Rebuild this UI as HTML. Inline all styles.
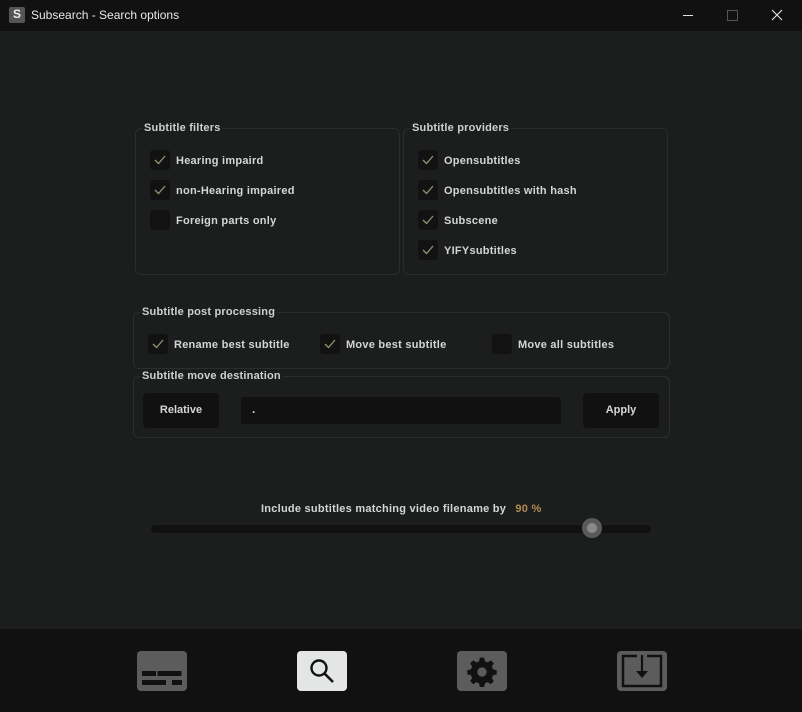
<!DOCTYPE html><html><head><style>
body{margin:0;width:802px;height:712px;background:#1c1e1d;font-family:"Liberation Sans",sans-serif;position:relative;overflow:hidden;color:#d4d6d6}
.a{position:absolute}
.tb{left:0;top:0;width:802px;height:31px;background:#111}
.grp{position:absolute;border:1px solid #2c2e2d;border-radius:6px}
.lg{position:absolute;font-size:11px;font-weight:bold;color:#cfd1d1;background:#1c1e1d;padding:0 2px;line-height:12px;letter-spacing:0.2px}
.cb{position:absolute;width:20px;height:20px;background:#121212;border-radius:3px}
.cb svg{position:absolute;left:4px;top:5px}
.lbl{position:absolute;font-size:11px;font-weight:bold;color:#d4d6d6;line-height:13px;letter-spacing:0.25px}
.btn{position:absolute;background:#111;border-radius:4px;font-size:11px;font-weight:bold;text-align:center;color:#d4d6d6}
.ic{position:absolute;top:651px;width:50px;height:40px;border-radius:4px;background:#5b5c5b}
</style></head><body>
<div class="a tb"></div>
<div class="a" style="left:9px;top:7px;width:16px;height:16px;background:#555;border-radius:2px;color:#eee;font-weight:bold;font-size:12px;text-align:center;line-height:14px">S</div>
<div class="a" style="left:31px;top:8px;font-size:12px;color:#e8e8e8">Subsearch - Search options</div>
<div class="a" style="left:683px;top:15px;width:10px;height:1px;background:#ddd"></div>
<div class="a" style="left:727px;top:10px;width:9px;height:9px;border:1px solid #555"></div>
<svg class="a" style="left:771px;top:9px" width="12" height="12"><path d="M1 1L11 11M11 1L1 11" stroke="#ddd" stroke-width="1.2"/></svg>

<div class="grp" style="left:135px;top:128px;width:263px;height:145px"></div>
<div class="lg" style="left:142px;top:122px">Subtitle filters</div>
<div class="grp" style="left:403px;top:128px;width:263px;height:145px"></div>
<div class="lg" style="left:410px;top:122px">Subtitle providers</div>

<div class="cb" style="left:150px;top:150px"><svg width="12" height="10"><path d="M1 5L4.5 8.5L11 1" stroke="#8b9670" stroke-width="1.3" fill="none"/></svg></div><div class="lbl" style="left:176px;top:155px">Hearing impaird</div>
<div class="cb" style="left:150px;top:180px"><svg width="12" height="10"><path d="M1 5L4.5 8.5L11 1" stroke="#8b9670" stroke-width="1.3" fill="none"/></svg></div><div class="lbl" style="left:176px;top:185px">non-Hearing impaired</div>
<div class="cb" style="left:150px;top:210px"></div><div class="lbl" style="left:176px;top:215px">Foreign parts only</div>

<div class="cb" style="left:418px;top:150px"><svg width="12" height="10"><path d="M1 5L4.5 8.5L11 1" stroke="#8b9670" stroke-width="1.3" fill="none"/></svg></div><div class="lbl" style="left:444px;top:155px">Opensubtitles</div>
<div class="cb" style="left:418px;top:180px"><svg width="12" height="10"><path d="M1 5L4.5 8.5L11 1" stroke="#8b9670" stroke-width="1.3" fill="none"/></svg></div><div class="lbl" style="left:444px;top:185px">Opensubtitles with hash</div>
<div class="cb" style="left:418px;top:210px"><svg width="12" height="10"><path d="M1 5L4.5 8.5L11 1" stroke="#8b9670" stroke-width="1.3" fill="none"/></svg></div><div class="lbl" style="left:444px;top:215px">Subscene</div>
<div class="cb" style="left:418px;top:240px"><svg width="12" height="10"><path d="M1 5L4.5 8.5L11 1" stroke="#8b9670" stroke-width="1.3" fill="none"/></svg></div><div class="lbl" style="left:444px;top:245px">YIFYsubtitles</div>

<div class="grp" style="left:133px;top:312px;width:535px;height:55px"></div>
<div class="lg" style="left:140px;top:306px">Subtitle post processing</div>
<div class="cb" style="left:148px;top:334px"><svg width="12" height="10"><path d="M1 5L4.5 8.5L11 1" stroke="#8b9670" stroke-width="1.3" fill="none"/></svg></div><div class="lbl" style="left:174px;top:339px">Rename best subtitle</div>
<div class="cb" style="left:320px;top:334px"><svg width="12" height="10"><path d="M1 5L4.5 8.5L11 1" stroke="#8b9670" stroke-width="1.3" fill="none"/></svg></div><div class="lbl" style="left:346px;top:339px">Move best subtitle</div>
<div class="cb" style="left:492px;top:334px"></div><div class="lbl" style="left:518px;top:339px">Move all subtitles</div>

<div class="grp" style="left:133px;top:376px;width:535px;height:60px"></div>
<div class="lg" style="left:140px;top:370px">Subtitle move destination</div>
<div class="btn" style="left:143px;top:393px;width:76px;height:35px;line-height:35px">Relative</div>
<div class="a" style="left:241px;top:397px;width:320px;height:27px;background:#111;border-radius:3px"><span style="position:absolute;left:11px;top:5px;font-size:12px;font-weight:bold">.</span></div>
<div class="btn" style="left:583px;top:393px;width:76px;height:35px;line-height:35px">Apply</div>

<div class="lbl" style="left:261px;top:503px">Include subtitles matching video filename by <span style="color:#b48a55;margin-left:6px">90 %</span></div>
<div class="a" style="left:151px;top:525px;width:500px;height:8px;background:#111;border-radius:4px"></div>
<div class="a" style="left:582px;top:518px;width:20px;height:20px;border-radius:50%;background:#5a5a5a"></div>
<div class="a" style="left:587px;top:523px;width:10px;height:10px;border-radius:50%;background:#8a8a8a"></div>

<div class="a" style="left:0;top:629px;width:802px;height:83px;background:#111"></div>
<div class="ic" style="left:137px"><svg width="50" height="40"><g fill="#111"><rect x="5" y="20" width="14" height="5"/><rect x="20.5" y="20" width="24" height="5"/><rect x="5" y="29" width="24" height="5"/><rect x="35" y="29" width="10" height="5"/></g></svg></div>
<div class="ic" style="left:297px;background:#e4e6e5"><svg width="50" height="40"><circle cx="22" cy="17" r="7.5" fill="none" stroke="#111" stroke-width="2.4"/><path d="M27.5 22.5L36 31" stroke="#111" stroke-width="2.6"/></svg></div>
<div class="ic" style="left:457px"><svg width="50" height="40" viewBox="0 0 50 40"><g transform="translate(25 21) scale(0.72)"><path fill="#111" d="M-3 -20h6l1 5 4 1.7 4.3-2.8 4.2 4.2-2.8 4.3 1.7 4 5 1v6l-5 1-1.7 4 2.8 4.3-4.2 4.2-4.3-2.8-4 1.7-1 5h-6l-1-5-4-1.7-4.3 2.8-4.2-4.2 2.8-4.3-1.7-4-5-1v-6l5-1 1.7-4-2.8-4.3 4.2-4.2 4.3 2.8 4-1.7z"/><circle r="6.5" fill="#5b5c5b"/></g></svg></div>
<div class="ic" style="left:617px"><svg width="50" height="40"><path d="M20 5H6v30h38V5H30" fill="none" stroke="#111" stroke-width="2.5"/><path d="M25 4v21" stroke="#111" stroke-width="2.2"/><path d="M19 20h12l-6 7z" fill="#111"/></svg></div>
</body></html>
